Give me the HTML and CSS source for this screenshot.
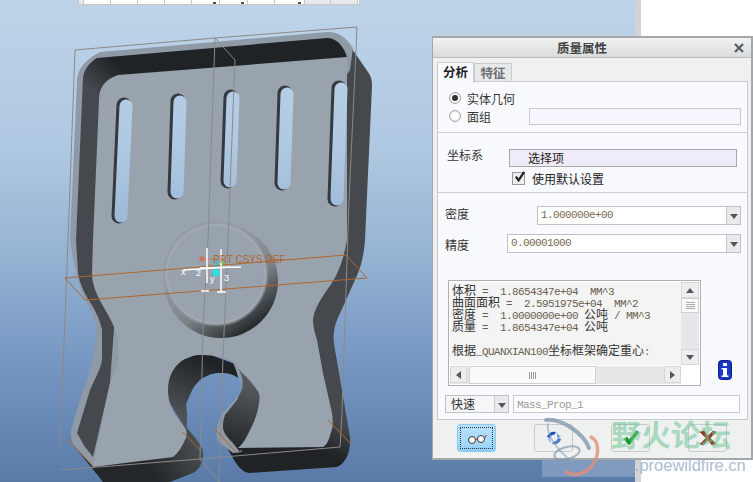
FILE: index.html
```html
<!DOCTYPE html>
<html lang="zh">
<head>
<meta charset="utf-8">
<title>质量属性</title>
<link rel="stylesheet" href="styles.css">
</head>
<body>
<div class="stage">
  <main class="viewport">
    <div class="strip-table">
      <i class="cell grey w5"></i><i class="cell w27"></i><i class="cell w27"></i><i class="cell w27"></i><i class="cell w27"></i><i class="cell w28 tick"></i><i class="cell w28 tick"></i><i class="cell w27"></i><i class="cell w30 tick"></i><i class="cell grey w25"></i><i class="cell grey w27"></i>
    </div>
    <svg class="model" viewBox="0 0 635 482" width="635" height="482" aria-label="model">
      <defs>
        <linearGradient id="sky" gradientUnits="userSpaceOnUse" x1="0" y1="0" x2="0" y2="482">
          <stop offset="0" stop-color="#bdd4e8"/><stop offset=".3" stop-color="#b0c9e2"/><stop offset=".5" stop-color="#9ab6d5"/><stop offset=".75" stop-color="#7597c2"/><stop offset="1" stop-color="#5a7ba8"/>
        </linearGradient>
        <linearGradient id="band" gradientUnits="userSpaceOnUse" x1="90" y1="88" x2="116" y2="62">
          <stop offset="0" stop-color="#45494d"/><stop offset="1" stop-color="#1f2326"/>
        </linearGradient>
        <linearGradient id="side" gradientUnits="userSpaceOnUse" x1="345" y1="425" x2="330" y2="455">
          <stop offset="0" stop-color="#45494d"/><stop offset="1" stop-color="#1f2326"/>
        </linearGradient>
        <linearGradient id="lowleft" gradientUnits="userSpaceOnUse" x1="150" y1="470" x2="200" y2="440">
          <stop offset="0" stop-color="#23272a"/><stop offset="1" stop-color="#4c5155"/>
        </linearGradient>
        <linearGradient id="well" gradientUnits="userSpaceOnUse" x1="205" y1="360" x2="175" y2="425">
          <stop offset="0" stop-color="#1f2326"/><stop offset="1" stop-color="#565b5f"/>
        </linearGradient>
        <linearGradient id="blob" gradientUnits="userSpaceOnUse" x1="250" y1="385" x2="230" y2="445">
          <stop offset="0" stop-color="#55595d"/><stop offset="1" stop-color="#24282b"/>
        </linearGradient>
        <linearGradient id="dome" gradientUnits="userSpaceOnUse" x1="185" y1="240" x2="250" y2="335">
          <stop offset="0" stop-color="#a2abb3"/><stop offset=".6" stop-color="#7c8388"/><stop offset="1" stop-color="#1c2023"/>
        </linearGradient>
        <radialGradient id="cap" gradientUnits="userSpaceOnUse" cx="216" cy="274" r="53">
          <stop offset="0" stop-color="#99a3ad"/><stop offset=".88" stop-color="#99a3ad"/><stop offset=".94" stop-color="#a2aab2"/><stop offset="1" stop-color="#7e868d" stop-opacity=".15"/>
        </radialGradient>
      </defs>
      <!-- far side, right and lower edge -->
      <path fill="url(#side)" d="M350,46 L368,72 C371,76 372,80 372,86 L365,240 C364,255 361,268 355,280 L337,320 C334,328 333,334 334,344 L350,437 C351,452 346,463 337,467 L250,473 C242,473 236,464 230,453 L217,430 L300,300 Z"/>
      <path fill="url(#lowleft)" d="M75,447 L103,482 L170,482 L193,473 C200,470 204,460 203,452 C202,445 194,436 187,428 L150,420 Z"/>
      <!-- rim -->
      <path fill="#8f9aa6" d="M70,240 L77,80 C78,68 85,60 100,52 L327,32 C338,31 347,38 353,48 L350,70 L200,300 L93,467 L75,447 C72,443 70,436 71,430 L83,390 C89,375 92,366 93,357 C95,345 97,336 96,327 C94,316 90,308 85,300 C78,285 74,265 70,240 Z"/>
      <!-- inner wall -->
      <path fill="url(#band)" d="M97,58 L327,38 C335,37 344,46 347,57 L347,80 L130,110 L110,383 L93,457 L85,447 L77,433 L90,390 C97,374 102,367 102,357 L102,330 C100,321 97,314 93,307 C85,295 80,285 78,273 L76,240 L83,77 C85,68 90,62 97,58 Z"/>
      <!-- keyhole -->
      <path fill="url(#well)" d="M235,364 L203,352 L170,365 L165,395 L187,432 L187,413 C186,405 186,402 188,400 C192,388 196,384 200,380 C208,374 215,373 220,373 C228,373 233,374 238,378 Z"/>
      <path fill="#8f9aa6" d="M232,360 L240,366 L243,380 C243,388 240,392 237,397 L223,413 C219,420 217,425 217,430 C216,436 217,440 220,443 L233,453 L242,452 L232,420 L242,385 Z"/>
      <path fill="url(#blob)" d="M238,365 L262,385 L262,410 L240,452 L232,442 C227,437 223,432 223,427 C223,421 224,418 225,415 L237,400 C242,392 244,386 242,378 Z"/>
      <!-- face -->
      <path fill="#99a3ad" d="M99,100 C99,88 104,80 118,75 L347,57 L347,240 C344,258 338,276 327,290 C320,300 314,310 313,320 C313,327 315,333 317,340 L323,373 L332,413 C333,422 333,428 331,432 C329,440 327,445 323,447 L238,448 C244,443 247,436 250,430 C255,420 258,412 259,403 C260,397 260,394 257,390 C253,384 248,378 242,373 L235,363 C226,358 215,355 203,355 C192,355 187,357 183,360 C174,366 168,376 168,390 C168,400 171,410 177,417 C181,422 184,426 186,430 C187,433 187,437 185,440 C182,447 178,453 173,457 L93,467 L110,383 C116,372 118,365 118,357 L118,340 C115,325 108,315 103,306 C97,295 92,285 92,273 L93,240 Z"/>
      <!-- slots -->
      <g class="slot-dark">
        <path d="M124,105 L119,216"/><path d="M178,101 L175,192"/><path d="M231,97 L228,181"/><path d="M285,93 L282,183"/><path d="M339,88 L335,199"/>
      </g>
      <g class="slot-sky">
        <path d="M126,106 L121,216"/><path d="M180,102 L177,192"/><path d="M233,98 L230,181"/><path d="M287,94 L284,183"/><path d="M341,89 L337,199"/>
      </g>
      <!-- dome -->
      <circle cx="221" cy="281" r="57" fill="url(#dome)"/>
      <circle cx="216" cy="274" r="53" fill="url(#cap)"/>
      <!-- bounding box -->
      <g class="wire">
        <path d="M75,50 L215,38 L357,27 L355,72 L349,200 L342,413 L340,447 L200,459 L60,470"/>
        <path d="M75,50 L68,240 L60,447"/>
        <path d="M215,38 L235,60 L228,240 L223,357 L219,482"/>
        <path d="M215,38 L208,240 L203,328 L200,459 L219,482"/>
      </g>
      <g class="plane">
        <path d="M65,278 L346,255 L367,278 L85,300 Z"/>
        <path d="M68,440 L92,465"/><path d="M183,432 L200,450"/><path d="M214,428 L237,453"/><path d="M328,420 L352,445"/>
      </g>
      <!-- csys -->
      <path class="csys-arrow" d="M203,259 L214,259"/>
      <circle cx="202" cy="259" r="2.6" fill="#d0705a"/>
      <path d="M217,259 L216,270" class="csys-teal"/>
      <path d="M220,261 L225,263 L222,266 Z" fill="#4fd24f"/>
      <circle cx="216" cy="273" r="3.4" fill="#22e6ea"/>
      <g class="csys">
        <path d="M207,248 L207,283"/><path d="M183,270 L230,267"/><path d="M221,249 L221,292"/><path d="M200,268 L241,267"/><path d="M217,292 L226,292"/><path d="M201,291 L209,291"/>
      </g>
      <text x="213" y="263" class="csys-name">PRT CSYS DEF</text>
      <text x="181" y="275" class="csys-label">x</text>
      <text x="196" y="276" class="csys-label">2</text>
      <text x="210" y="282" class="csys-label">y</text>
      <text x="224" y="281" class="csys-label">3</text>
    </svg>
  </main>
  <div class="gutter"></div>
  <div class="blank"></div>

  <section class="dialog">
    <header class="titlebar"><span class="title">质量属性</span>
      <svg class="close" viewBox="0 0 10 10" width="10" height="10"><path d="M1,1 L9,9 M9,1 L1,9"/></svg>
    </header>
    <nav class="tabs"><span class="tab active">分析</span><span class="tab">特征</span></nav>
    <div class="panel">
      <div class="sec sec-geo">
        <div class="row"><span class="radio on"></span><span>实体几何</span></div>
        <div class="row"><span class="radio"></span><span>面组</span><span class="quilt"></span></div>
      </div>
      <div class="sec sec-csys">
        <div class="row"><span class="csys-lab">坐标系</span><span class="pick">选择项</span></div>
        <div class="row check-row"><span class="checkbox"><svg viewBox="0 0 14 14" width="13" height="13"><path d="M3,6 L6,10 L12,1" /></svg></span><span>使用默认设置</span></div>
      </div>
      <div class="sec sec-calc">
        <div class="row between"><span class="lab-up">密度</span><div class="combo w204"><span class="combo-text">1.000000e+00</span><span class="combo-btn"></span></div></div>
        <div class="row between second"><span class="lab-down">精度</span><div class="combo w234"><span class="combo-text">0.00001000</span><span class="combo-btn"></span></div></div>
        <div class="result-row">
          <div class="result">
            <div class="result-top">
              <pre class="output">体积<span class="lat"> =  1.8654347e+04  MM^3</span>
曲面面积<span class="lat"> =  2.5951975e+04  MM^2</span>
密度<span class="lat"> =  1.0000000e+00 </span>公吨<span class="lat"> / MM^3</span>
质量<span class="lat"> =  1.8654347e+04 </span>公吨

根据<span class="lat">_QUANXIAN100</span>坐标框架确定重心<span class="lat">:</span></pre>
              <div class="vscroll">
                <span class="sb-btn"><i class="tri up"></i></span>
                <span class="v-thumb"><i></i><i></i><i></i><i></i></span>
                <span class="v-track"></span>
                <span class="sb-btn"><i class="tri down"></i></span>
              </div>
            </div>
            <div class="hscroll">
              <span class="sb-btn h"><i class="tri left"></i></span>
              <span class="h-thumb"><b></b><b></b><b></b><b></b></span>
              <span class="h-track"></span>
              <span class="sb-btn h"><i class="tri right"></i></span>
            </div>
          </div>
          <svg class="info" viewBox="0 0 14 20" width="14" height="20"><rect x=".5" y=".5" width="13" height="19" rx="3" fill="#1637c8" stroke="#0b1f80"/><rect x="5" y="3" width="4" height="3" fill="#fff"/><path d="M3.5,8 H9 V15.5 H10.5 V17 H3.5 V15.5 H5 V9.5 H3.5 Z" fill="#fff"/></svg>
        </div>
        <div class="name-row">
          <div class="combo w64"><span class="combo-text cjk">快速</span><span class="combo-btn"></span></div>
          <span class="name-input">Mass_Prop_1</span>
        </div>
      </div>
    </div>
    <footer class="actions">
      <button class="btn focus"><svg viewBox="0 0 20 11" width="20" height="11"><circle cx="5" cy="7" r="3.5" fill="#fff" stroke="#333"/><circle cx="14" cy="6" r="3.5" fill="#fff" stroke="#333"/><path d="M8.500,6.500 L10.500,6 M17.500,5 L19.500,2" stroke="#a33" fill="none"/></svg></button>
      <button class="btn"><svg viewBox="0 0 20 16" width="20" height="16"><path d="M3,7 C4,3 8,1 12,2 L10,5 C8,4 7,6 6,8 Z" fill="#1e4fb5"/><path d="M12,2 L17,7 L13,8 L13,4Z" fill="#6fa3e0"/><path d="M17,9 C16,13 12,15 8,14 L10,11 C12,12 13,10 14,8 Z" fill="#3e78d0"/><path d="M8,14 L3,9 L7,8 L7,12 Z" fill="#9cc0ee"/></svg></button>
      <button class="btn"><svg viewBox="0 0 20 16" width="20" height="16"><path d="M3,9 L6,7 L8,10 L15,1 L18,2 L8,15 Z" fill="#12a02a" stroke="#0a6b1b" stroke-width=".5"/></svg></button>
      <button class="btn"><svg viewBox="0 0 20 16" width="20" height="16"><path d="M2,2 L6,1 L10,6 L15,1 L18,2 L12,8 L18,14 L14,15 L10,10 L5,15 L2,14 L8,8 Z" fill="#9c3a1c" stroke="#5a2a18" stroke-width=".5"/></svg></button>
    </footer>
  </section>

  <svg class="watermark" viewBox="0 0 753 482" width="753" height="482" aria-label="watermark">
    <rect x="542" y="460" width="93" height="17" fill="#d8e4f0" opacity=".28"/>
    <g fill="none" stroke-linecap="round">
      <path d="M546,420 C562,418 584,434 589,448" stroke="#7e94aa" stroke-width="4" opacity=".75"/>
      <path d="M548,424 C546,436 560,452 574,464" stroke="#8ea3b8" stroke-width="2" opacity=".6"/>
      <path d="M591,437 C601,442 600,462 586,471 C580,475 574,476 566,472" stroke="#e08f7c" stroke-width="3.500" opacity=".8"/>
      <ellipse cx="567" cy="453" rx="13" ry="6" transform="rotate(-15 567 453)" stroke="#7f93a8" stroke-width="2" opacity=".65"/>
    </g>
    <text x="611" y="446" class="wm-title">野火论坛</text>
    <text x="600" y="471" class="wm-url">www.proewildfire.cn</text>
  </svg>
</div>
</body>
</html>
```
FILE: styles.css
```css
* { box-sizing: border-box; }
html, body { margin: 0; padding: 0; background: #fff; }
.stage {
  position: relative;
  display: flex;
  width: 753px;
  height: 482px;
  overflow: hidden;
  font-family: "Noto Sans CJK SC", "Liberation Sans", sans-serif;
  font-size: 12px;
  color: #333;
}
.viewport {
  position: relative;
  width: 635px;
  height: 482px;
  background: linear-gradient(180deg, #bdd4e8 0%, #b0c9e2 30%, #9ab6d5 50%, #7597c2 75%, #5a7ba8 100%);
}
.gutter { width: 6px; background: #d0d4d6; }
.blank { flex: 1; background: #fff; }

.strip-table {
  display: flex;
  height: 5px;
  width: 282px;
  margin-left: 78px;
  background: #fff;
  border-bottom: 1px solid #c4c6c8;
  border-left: 1px solid #c4c6c8;
  border-right: 1px solid #c4c6c8;
}
.cell { display: block; height: 4px; border-right: 1px solid #c4c6c8; background: #fff; position: relative; }
.cell.grey { background: #e8e9ea; }
.w5 { width: 5px; } .w25 { width: 26px; } .w27 { width: 27px; } .w28 { width: 28px; } .w30 { width: 30px; }
.tick::after { content: ""; position: absolute; right: 3px; bottom: 0; width: 3px; height: 2px; background: #555; }

.model { position: absolute; left: 0; top: 0; }
.slot-dark path, .slot-sky path { fill: none; stroke-linecap: round; }
.slot-dark path { stroke: #353a3e; stroke-width: 15px; }
.slot-sky path { stroke: url(#sky); stroke-width: 13px; }
.wire path { fill: none; stroke: #8b8a88; stroke-width: 1px; }
.plane path { fill: none; stroke: #b0662f; stroke-width: 1px; }
.csys path { fill: none; stroke: #fff; stroke-width: 1.5px; }
.csys-arrow { fill: none; stroke: #d0705a; stroke-width: 1px; }
.csys-teal { fill: none; stroke: #22c8c0; stroke-width: 2px; }
.csys-name { font-family: "Liberation Sans", sans-serif; font-size: 10px; fill: #b0662f; }
.csys-label { font-family: "Liberation Sans", sans-serif; font-size: 9px; fill: #fff; }

.dialog {
  position: absolute;
  left: 432px;
  top: 36px;
  width: 321px;
  height: 424px;
  display: flex;
  flex-direction: column;
  padding: 0 4px 0 4px;
  background: #eff1f1;
  border: 1px solid #a4a8ab;
  border-width: 2px 2px 2px 1px;
}
.titlebar {
  position: relative;
  height: 20px;
  margin: 0 -4px;
  padding-right: 20px;
  display: flex;
  align-items: center;
  justify-content: center;
  background: linear-gradient(180deg, #f1f2f2, #d9dcdd);
  border-bottom: 1px solid #b9bdbf;
}
.title { font-size: 12.5px; font-weight: 700; color: #444; }
.close { position: absolute; right: 7px; top: 5px; }
.close path { stroke: #5c6266; stroke-width: 2.4px; fill: none; }
.tabs { display: flex; height: 24px; padding-top: 4px; }
.tab {
  width: 38px;
  height: 19px;
  margin-top: 1px;
  text-align: center;
  line-height: 18px;
  font-size: 12.5px;
  font-weight: 700;
  color: #6a7074;
  background: #e6e8e9;
  border: 1px solid #c8cbcd;
  border-bottom: 0;
}
.tab.active {
  width: 37px;
  height: 21px;
  margin-top: 0;
  color: #222;
  background: #f9faff;
  position: relative;
  z-index: 1;
  border-right: 1px solid #c8cbcd;
}
.panel {
  width: 311px;
  height: 339px;
  margin-top: -1px;
  background: #f9faff;
  border: 1px solid #c8cbcd;
}
.sec { border-bottom: 1px solid #cdd0d2; }
.sec:last-child { border-bottom: 0; }
.row { display: flex; align-items: center; }
.sec-geo { height: 51px; padding: 7px 6px 0 11px; }
.sec-geo .row { height: 18px; gap: 6px; }
.radio {
  width: 12px;
  height: 12px;
  border-radius: 50%;
  border: 1px solid #a5a9ac;
  background: #fff;
  box-shadow: inset 0 0 1px #999;
  position: relative;
}
.radio.on::after {
  content: "";
  position: absolute;
  left: 2px;
  top: 2px;
  width: 6px;
  height: 6px;
  border-radius: 50%;
  background: #333;
}
.quilt { width: 212px; height: 17px; margin-top: 1px; margin-left: auto; background: #f7f5fd; border: 1px solid #c8cacc; }
.sec-csys { height: 60px; padding: 16px 0 0 9px; }
.csys-lab { width: 62px; margin-top: -8px; }
.pick {
  width: 228px;
  height: 18px;
  padding-left: 18px;
  line-height: 16px;
  background: #f0ebf8;
  border: 1px solid #a8a8a8;
  color: #222;
}
.check-row { margin: 3px 0 0 65px; gap: 7px; height: 16px; color: #222; }
.checkbox { width: 13px; height: 13px; background: #eee; border: 1px solid #9a9a9a; display: flex; }
.checkbox svg { margin: -2px 0 0 0; overflow: visible; }
.checkbox path { fill: none; stroke: #222; stroke-width: 2.4px; }
.sec-calc { padding: 13px 6px 0 7px; }
.between { justify-content: space-between; height: 19px; }
.second { margin-top: 9px; }
.lab-up { margin-top: -4px; }
.lab-down { margin-top: 2px; }
.combo { display: flex; height: 19px; background: #fff; border: 1px solid #c0c3c5; }
.w204 { width: 204px; } .w234 { width: 234px; } .w64 { width: 64px; height: 18px; }
.combo-text { flex: 1; padding-left: 3px; font-family: "Liberation Mono", monospace; font-size: 11px; letter-spacing: -.6px; line-height: 17px; color: #7a6a50; }
.combo-text.cjk { font-family: "Noto Sans CJK SC", sans-serif; font-size: 12px; letter-spacing: 0; line-height: 16px; color: #333; padding-left: 5px; background: #f5f6f7; }
.combo-btn { width: 14px; background: #e9eaeb; border-left: 1px solid #c8cacc; position: relative; }
.combo-btn::after {
  content: "";
  position: absolute;
  left: 3px;
  top: 7px;
  border: 4px solid transparent;
  border-top: 5px solid #555;
  border-bottom: 0;
}
.result-row { display: flex; align-items: flex-end; margin: 27px 0 0 3px; }
.result { width: 253px; height: 106px; background: #fff; border: 1px solid #aeb0b2; padding: 1px; }
.result-top { display: flex; height: 83px; }
.output {
  flex: 1;
  margin: 0;
  padding: 2px 0 0 2px;
  background: #f4f4f4;
  font-family: "Noto Sans CJK SC", sans-serif;
  font-size: 12px;
  line-height: 12px;
  color: #333;
  white-space: pre;
  overflow: hidden;
}
.lat { font-family: "Liberation Mono", monospace; font-size: 11px; letter-spacing: -.6px; line-height: 0; color: #6a5f50; }
.vscroll { width: 18px; display: flex; flex-direction: column; background: #e4e5e6; }
.sb-btn { display: flex; align-items: center; justify-content: center; height: 16px; background: #ecedee; border: 1px solid #d4d6d8; }
.sb-btn.h { width: 17px; height: 17px; }
.v-thumb { height: 15px; display: flex; flex-direction: column; gap: 1px; align-items: center; justify-content: center; background: #fafafa; border: 1px solid #cfd1d3; }
.v-thumb i { display: block; width: 9px; height: 1px; background: #aaa; }
.v-track { flex: 1; background: #e6e7e8; }
.hscroll { display: flex; width: 231px; height: 18px; margin-top: 1px; background: #e6e7e8; }
.h-thumb { width: 127px; margin-left: 2px; display: flex; gap: 1px; align-items: center; justify-content: center; background: #fafafa; border: 1px solid #cfd1d3; }
.h-thumb b { display: block; width: 1px; height: 7px; background: #999; }
.h-track { flex: 1; }
.tri { display: block; width: 0; height: 0; border: 4px solid transparent; }
.tri.up { border-top: 0; border-bottom: 5px solid #555; }
.tri.down { border-bottom: 0; border-top: 5px solid #555; }
.tri.left { border-left: 0; border-right: 5px solid #555; }
.tri.right { border-right: 0; border-left: 5px solid #555; }
.info { margin: 0 0 6px 17px; }
.name-row { display: flex; gap: 4px; margin-top: 9px; }
.name-input {
  width: 227px;
  height: 18px;
  padding: 1px 0 0 3px;
  background: #fff;
  border: 1px solid #c8cacc;
  font-family: "Liberation Mono", monospace;
  font-size: 11px;
  letter-spacing: -.6px;
  line-height: 16px;
  color: #9a9a9a;
}
.actions { display: flex; gap: 38px; padding: 4px 0 0 20px; }
.btn {
  width: 39px;
  height: 28px;
  padding: 0;
  display: flex;
  align-items: center;
  justify-content: center;
  background: #eef0f0;
  border: 1px solid #c8cbcd;
  border-radius: 3px;
}
.btn.focus {
  background: linear-gradient(180deg, #b5e0fb 0%, #a6d8fa 70%, #8fcdf7 100%);
  border-color: #8cc8ef;
  outline: 1px dotted #333;
  outline-offset: -4px;
}
.watermark { position: absolute; left: 0; top: 0; pointer-events: none; }
.wm-title { font-family: "Noto Sans CJK SC", sans-serif; font-size: 30px; font-weight: 700; fill: #6fc795; opacity: .55; }
.wm-url { font-family: "Liberation Sans", sans-serif; font-size: 16.5px; fill: #8aa2c2; opacity: .7; }
```
